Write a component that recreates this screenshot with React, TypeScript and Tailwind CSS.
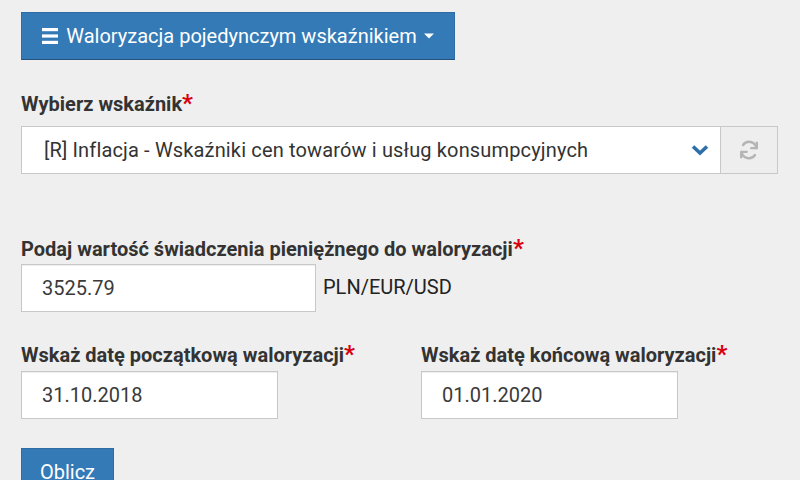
import React from "react";

const font = { fontFamily: "Roboto, 'Liberation Sans', sans-serif" };

function Label({ children }: { children: React.ReactNode }) {
  return (
    <div className="h-[24px] text-[20px] font-bold text-[#333] leading-[24px] whitespace-nowrap">
      {children}
      <span className="text-[#d9000d] text-[24px] leading-[0]">*</span>
    </div>
  );
}

function TextBox({ value, w }: { value: string; w: string }) {
  return (
    <div
      className={`${w} h-[48px] bg-white border border-[#c8c8c8] shadow-[inset_0_1px_1px_rgba(0,0,0,0.075)] flex items-center pl-[20px] text-[20px] text-[#3a3a3a]`}
    >
      {value}
    </div>
  );
}

export default function App() {
  return (
    <div className="w-[800px] h-[480px] bg-[#efefef] overflow-hidden" style={font}>
      <div className="pl-[21px] pt-[12px]">
        <button className="h-[48px] w-[434px] bg-[#337ab7] border border-[#2e6da4] border-b-[#24527a] text-white text-[20px] flex items-center justify-center gap-[6px]">
          <svg width="18" height="18" viewBox="0 0 18 18" className="mr-[1px]">
            <rect x="1" y="1" width="16" height="3.2" fill="white" />
            <rect x="1" y="7.4" width="16" height="3.2" fill="white" />
            <rect x="1" y="13.8" width="16" height="3.2" fill="white" />
          </svg>
          <span>Waloryzacja pojedynczym wskaźnikiem</span>
          <svg width="12" height="8" viewBox="0 0 12 8">
            <path d="M1 1.5 L11 1.5 L6 6.5 Z" fill="white" />
          </svg>
        </button>

        <div className="mt-[32px]">
          <Label>Wybierz wskaźnik</Label>
          <div className="mt-[10px] flex w-[757px] h-[48px]">
            <div className="flex-1 bg-white border border-[#c8c8c8] flex items-center pl-[22px] pr-[11px] text-[20px] tracking-[0.15px] text-[#333]">
              <span className="flex-1">[R] Inflacja - Wskaźniki cen towarów i usług konsumpcyjnych</span>
              <svg width="18" height="12" viewBox="0 0 18 12">
                <path d="M2 2.5 L9 9 L16 2.5" fill="none" stroke="#2f6fa8" strokeWidth="3.6" />
              </svg>
            </div>
            <div className="w-[57px] bg-[#eeeeee] border border-l-0 border-[#c8c8c8] flex items-center justify-center">
              <svg width="22" height="22" viewBox="0 0 24 24" fill="none" stroke="#b5b5b5" strokeWidth="2.6" strokeLinecap="round">
                <path d="M20 10 A8 8 0 0 0 5.5 6.5" />
                <path d="M4 14 A8 8 0 0 0 18.5 17.5" />
                <path d="M20.5 4 L20.5 10 L14.5 10" strokeLinejoin="round" />
                <path d="M3.5 20 L3.5 14 L9.5 14" strokeLinejoin="round" />
              </svg>
            </div>
          </div>
        </div>

        <div className="mt-[63px]">
          <Label>Podaj wartość świadczenia pieniężnego do waloryzacji</Label>
          <div className="mt-[3px] flex items-center gap-[7px]">
            <TextBox value="3525.79" w="w-[295px]" />
            <span className="text-[20px] text-[#222] -mt-[2px]">PLN/EUR/USD</span>
          </div>
        </div>

        <div className="mt-[31px] flex">
          <div className="w-[400px]">
            <Label>Wskaż datę początkową waloryzacji</Label>
            <div className="mt-[4px]">
              <TextBox value="31.10.2018" w="w-[257px]" />
            </div>
          </div>
          <div>
            <Label>Wskaż datę końcową waloryzacji</Label>
            <div className="mt-[4px]">
              <TextBox value="01.01.2020" w="w-[257px]" />
            </div>
          </div>
        </div>

        <button className="mt-[29px] w-[93px] h-[48px] bg-[#337ab7] border border-[#2e6da4] text-white text-[20px] flex items-center justify-center">
          Oblicz
        </button>
      </div>
    </div>
  );
}
